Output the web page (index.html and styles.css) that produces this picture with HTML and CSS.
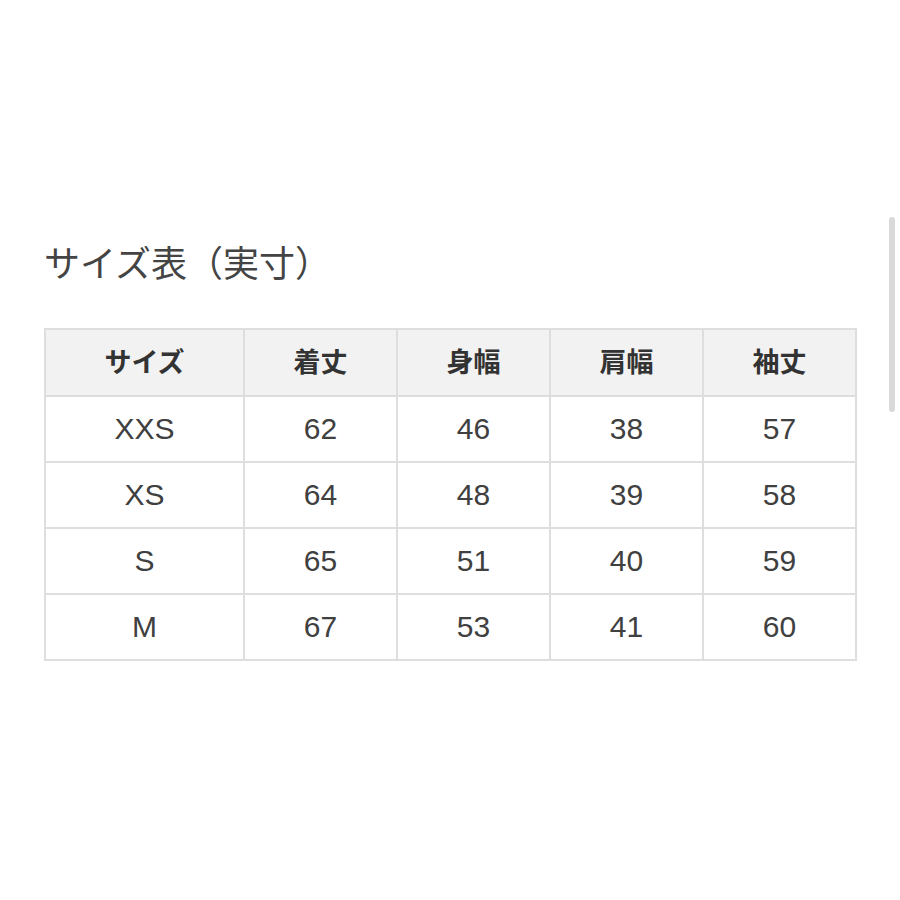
FILE: index.html
```html
<!DOCTYPE html>
<html lang="ja">
<head>
<meta charset="utf-8">
<link rel="stylesheet" href="styles.css">
</head>
<body>
<div class="page">
  <h2 class="title">サイズ表（実寸）</h2>
  <table class="size-table">
    <colgroup>
      <col class="c1"><col class="cn"><col class="cn"><col class="cn"><col class="cn">
    </colgroup>
    <thead>
      <tr><th>サイズ</th><th>着丈</th><th>身幅</th><th>肩幅</th><th>袖丈</th></tr>
    </thead>
    <tbody>
      <tr><td>XXS</td><td>62</td><td>46</td><td>38</td><td>57</td></tr>
      <tr><td>XS</td><td>64</td><td>48</td><td>39</td><td>58</td></tr>
      <tr><td>S</td><td>65</td><td>51</td><td>40</td><td>59</td></tr>
      <tr><td>M</td><td>67</td><td>53</td><td>41</td><td>60</td></tr>
    </tbody>
  </table>
</div>
<div class="scrollbar"></div>
</body>
</html>
```
FILE: styles.css
```css
html, body {
  margin: 0;
  padding: 0;
  background: #ffffff;
}
body {
  font-family: "Liberation Sans", "Noto Sans CJK JP", sans-serif;
  color: #333;
}
.page {
  padding: 240px 0 0 44px;
}
.title {
  margin: 0 0 46px 0;
  font-family: "Noto Sans CJK JP", sans-serif;
  font-weight: 400;
  font-size: 36px;
  line-height: 42px;
  color: #444;
}
.size-table {
  border-collapse: collapse;
  width: 813px;
  table-layout: fixed;
}
.size-table col.c1 { width: 199px; }
.size-table col.cn { width: 153px; }
.size-table th,
.size-table td {
  border: 2px solid #dedede;
  height: 64px;
  padding: 0;
  text-align: center;
  vertical-align: middle;
}
.size-table th {
  height: 61px;
  padding-bottom: 4px;
  background: #f2f2f2;
  font-family: "Noto Sans CJK JP", sans-serif;
  font-weight: 700;
  font-size: 27px;
  color: #333;
}
.size-table td {
  font-family: "Liberation Sans", "Noto Sans CJK JP", sans-serif;
  font-size: 30px;
  color: #404040;
}
.scrollbar {
  position: absolute;
  left: 889px;
  top: 217px;
  width: 6px;
  height: 195px;
  border-radius: 3px;
  background: #d9d9d9;
}
```
